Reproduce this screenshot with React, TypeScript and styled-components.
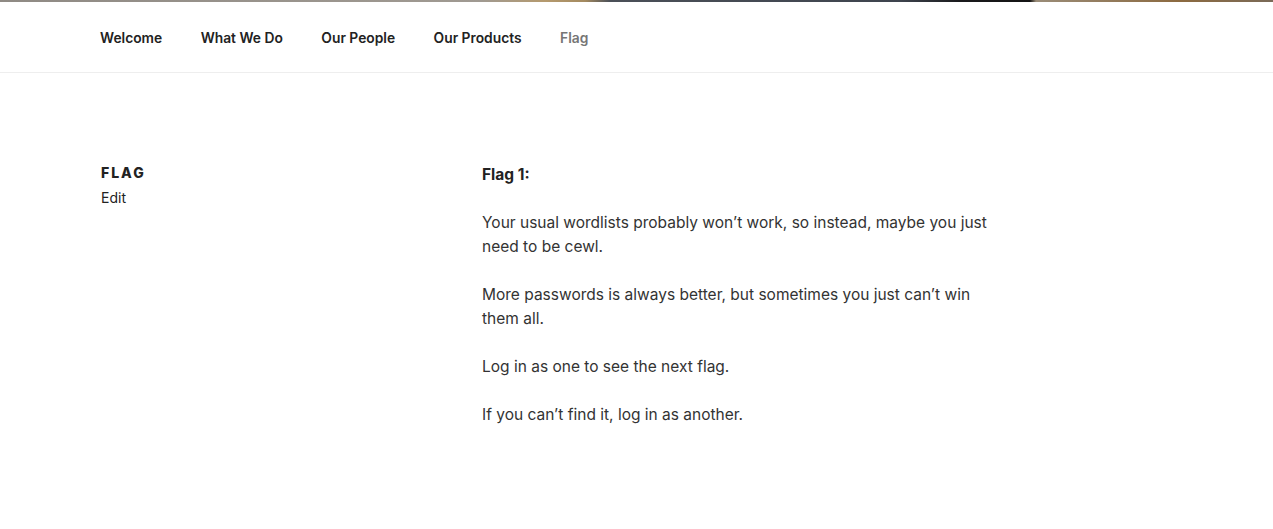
import React from "react";
import styled, { createGlobalStyle } from "styled-components";

const GlobalStyle = createGlobalStyle`
  html, body { margin: 0; padding: 0; background: #fff; }
  body { font-family: "Inter", "Liberation Sans", sans-serif; color: #333; }
`;

const Page = styled.div`
  min-height: 529px;
  background: #fff;
`;

const HeaderStrip = styled.div`
  height: 2px;
  background: linear-gradient(
    to right,
    #8f8a84 0px,
    #a09a92 480px,
    #b59a6e 545px,
    #a48a60 585px,
    #4b5058 610px,
    #3e444e 900px,
    #1a1a1c 960px,
    #141414 1030px,
    #9a8c78 1036px,
    #8c6a40 1180px,
    #7a6a58 1273px
  );
`;

const NavBar = styled.nav`
  height: 71px;
  border-bottom: 1px solid #eee;
  box-sizing: border-box;
  display: flex;
  align-items: center;
  padding: 0 0 0 100px;
`;

const Menu = styled.ul`
  list-style: none;
  margin: 0;
  padding: 0;
  display: flex;
  align-items: center;
  gap: 38.5px;
`;

const MenuItem = styled.li<{ $current?: boolean }>`
  font-size: 13.8px;
  line-height: 20px;
  font-weight: 600;
  color: ${(p) => (p.$current ? "#767676" : "#222")};
  padding-top: 2px;
`;

const Main = styled.main`
  display: grid;
  grid-template-columns: 382px 520px;
  padding: 90px 0 0 100px;
`;

const EntryHeader = styled.header`
  display: flex;
  flex-direction: column;
  gap: 5px;
`;

const Title = styled.h1`
  margin: 0;
  font-size: 14px;
  line-height: 20px;
  font-weight: 800;
  letter-spacing: 0.14em;
  text-transform: uppercase;
  color: #222;
  padding-left: 1px;
`;

const EditLink = styled.span`
  font-size: 14px;
  line-height: 20px;
  color: #222;
  padding-left: 1px;
`;

const EntryContent = styled.div`
  font-size: 15.5px;
  line-height: 24px;
  color: #333;
`;

const Para = styled.p`
  margin: 0 0 24px;
`;

const Strong = styled.strong`
  font-weight: 700;
  color: #222;
`;

const navItems = ["Welcome", "What We Do", "Our People", "Our Products", "Flag"];

export default function App() {
  return (
    <Page>
      <GlobalStyle />
      <HeaderStrip />
      <NavBar>
        <Menu>
          {navItems.map((item) => (
            <MenuItem key={item} $current={item === "Flag"}>
              {item}
            </MenuItem>
          ))}
        </Menu>
      </NavBar>
      <Main>
        <EntryHeader>
          <Title>Flag</Title>
          <EditLink>Edit</EditLink>
        </EntryHeader>
        <EntryContent>
          <Para>
            <Strong>Flag 1:</Strong>
          </Para>
          <Para>Your usual wordlists probably won’t work, so instead, maybe you just need to be cewl.</Para>
          <Para>More passwords is always better, but sometimes you just can’t win them all.</Para>
          <Para>Log in as one to see the next flag.</Para>
          <Para>If you can’t find it, log in as another.</Para>
        </EntryContent>
      </Main>
    </Page>
  );
}
